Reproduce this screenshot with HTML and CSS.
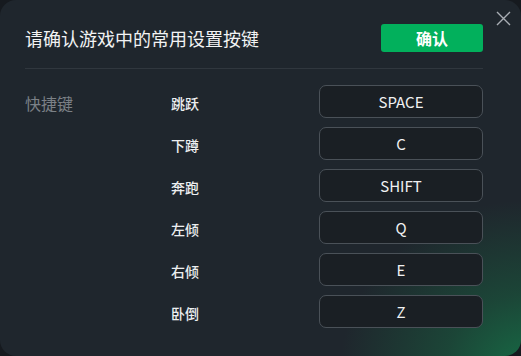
FILE: index.html
```html
<!DOCTYPE html>
<html lang="zh-CN">
<head>
<meta charset="utf-8">
<title>常用设置按键</title>
<link rel="stylesheet" href="styles.css">
</head>
<body>
<div class="dialog">
  <button class="close" aria-label="关闭">
    <svg width="15" height="15" viewBox="0 0 15 15"><path d="M1 1 L14 14 M14 1 L1 14" stroke="#a9aeb4" stroke-width="1.4" fill="none"/></svg>
  </button>
  <div class="header">
    <h1 class="title">请确认游戏中的常用设置按键</h1>
    <button class="confirm">确认</button>
  </div>
  <div class="divider"></div>
  <div class="keys">
    <div class="section">快捷键</div>
    <div class="action">跳跃</div><div class="key">SPACE</div>
    <div class="action">下蹲</div><div class="key">C</div>
    <div class="action">奔跑</div><div class="key">SHIFT</div>
    <div class="action">左倾</div><div class="key">Q</div>
    <div class="action">右倾</div><div class="key">E</div>
    <div class="action">卧倒</div><div class="key">Z</div>
  </div>
</div>
</body>
</html>
```
FILE: styles.css
```css
html, body {
  margin: 0;
  padding: 0;
  background: #161a1f;
}
body {
  width: 521px;
  height: 356px;
  overflow: hidden;
  font-family: "Noto Sans CJK SC", "Noto Sans", sans-serif;
}
.dialog {
  position: relative;
  width: 521px;
  height: 356px;
  box-sizing: border-box;
  border-radius: 16px;
  background:
    radial-gradient(ellipse 190px 170px at 530px 370px, rgba(22,115,72,0.9) 0%, rgba(24,100,65,0.5) 45%, rgba(31,38,45,0) 100%),
    #1f262d;
  padding: 24px 38px 0 25px;
}
.close {
  position: absolute;
  top: 11px;
  right: 10px;
  width: 15px;
  height: 15px;
  padding: 0;
  border: 0;
  background: none;
  display: flex;
}
.header {
  display: flex;
  align-items: center;
  justify-content: space-between;
  height: 28px;
}
.title {
  margin: 0;
  font-size: 18px;
  font-weight: 400;
  color: #f2f3f4;
  line-height: 28px;
}
.confirm {
  width: 102px;
  height: 28px;
  border: 0;
  border-radius: 3px;
  background: #02b05c;
  color: #ffffff;
  font-family: "Noto Sans CJK SC", sans-serif;
  font-size: 16px;
  font-weight: 700;
  padding: 0;
}
.divider {
  height: 1px;
  background: #30373e;
  margin-top: 16px;
}
.keys {
  display: grid;
  grid-template-columns: 146px 148px 164px;
  grid-auto-rows: 33px;
  row-gap: 9px;
  margin-top: 16px;
  align-items: center;
}
.section {
  grid-column: 1;
  grid-row: 1;
  font-size: 16px;
  color: #7b8086;
  padding-top: 2px;
}
.action {
  grid-column: 2;
  font-size: 14px;
  font-weight: 500;
  color: #eceef0;
  padding-top: 2px;
}
.key {
  grid-column: 3;
  height: 33px;
  box-sizing: border-box;
  border: 1px solid #4a5158;
  border-radius: 7px;
  background: #1a1f24;
  color: #f0f1f2;
  font-size: 15px;
  display: flex;
  align-items: center;
  justify-content: center;
}
```
